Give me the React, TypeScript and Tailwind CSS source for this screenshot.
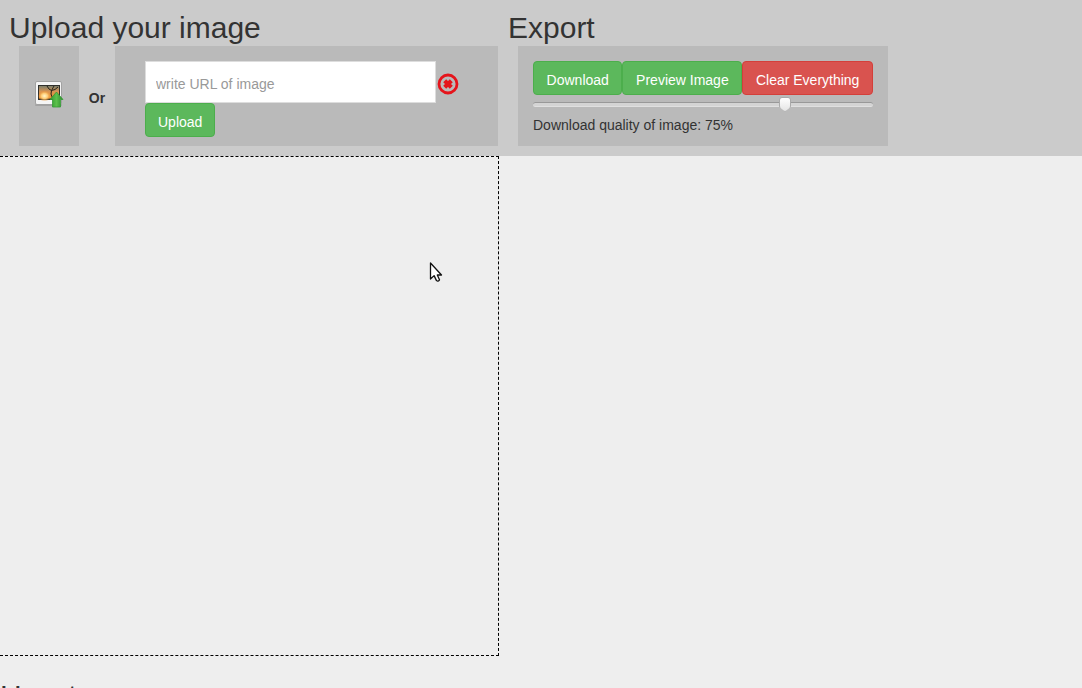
import { useState } from "react";

const button =
  "h-[34px] rounded border px-3 pt-1 text-sm leading-5 whitespace-nowrap text-white";
const green = "border-[#4cae4c] bg-[#5cb85c]";
const red = "border-[#d43f3a] bg-[#d9534f]";

function PictureIcon() {
  return (
    <svg width="30" height="30" viewBox="0 0 30 30" aria-hidden="true">
      <defs>
        <linearGradient id="sky" x1="0" y1="0" x2="0" y2="1">
          <stop offset="0" stopColor="#7d806c" />
          <stop offset="0.45" stopColor="#d89452" />
          <stop offset="1" stopColor="#ee9433" />
        </linearGradient>
        <radialGradient id="sun" cx="0.5" cy="0.5" r="0.5">
          <stop offset="0" stopColor="#fff6cc" />
          <stop offset="0.5" stopColor="#fdcb74" />
          <stop offset="1" stopColor="#e88a2c" stopOpacity="0" />
        </radialGradient>
        <linearGradient id="arrow" x1="0" y1="0" x2="1" y2="0">
          <stop offset="0" stopColor="#2f9a2f" />
          <stop offset="0.5" stopColor="#5cc04c" />
          <stop offset="1" stopColor="#2a8a2a" />
        </linearGradient>
      </defs>
      <rect x="1" y="25" width="27" height="2" rx="1" fill="#999" opacity="0.7" />
      <rect x="1.5" y="2.5" width="26" height="23" rx="1.5" fill="#f5f5f5" stroke="#a2a2a2" />
      <rect x="4" y="6" width="22" height="15" fill="#30302c" />
      <rect x="5" y="7" width="20" height="12.5" fill="url(#sky)" />
      <ellipse cx="10.5" cy="17" rx="6.5" ry="5.5" fill="url(#sun)" />
      <path d="M13 7l2 3 2.5 1.5L20 7M17.5 11.5L17 15l1.5 4M24 8l-3 2.5-3.5 1" stroke="#25241b" strokeWidth="1" fill="none" />
      <path d="M22.5 13l6.5 7.5h-2.5V28h-8v-7.5H16z" fill="url(#arrow)" stroke="#359a35" strokeWidth="0.8" strokeLinejoin="round" />
    </svg>
  );
}

function ClearIcon() {
  return (
    <svg width="22" height="22" viewBox="0 0 22 22" aria-hidden="true">
      <circle cx="11" cy="11" r="9" fill="none" stroke="#e5141b" strokeWidth="2.8" />
      <path d="M7.7 7.7l6.6 6.6M14.3 7.7l-6.6 6.6" stroke="#e5141b" strokeWidth="4.2" />
    </svg>
  );
}

function Pointer() {
  return (
    <svg
      className="pointer-events-none absolute left-[429px] top-[104px]"
      width="15"
      height="23"
      viewBox="0 0 15 23"
      aria-hidden="true"
    >
      <path
        d="M1.5 2v16l3.6-3.4 2.4 5q1.6 1.3 3-.8l-2.2-4.8h4.2z"
        fill="#fff"
        stroke="#111"
        strokeWidth="1.3"
        strokeLinejoin="round"
      />
    </svg>
  );
}

export default function App() {
  const [quality, setQuality] = useState(75);
  const [url, setUrl] = useState("");

  return (
    <div className="min-h-screen bg-[#eeeeee] font-['Liberation_Sans',Arial,sans-serif] text-sm leading-5 text-[#333333]">
      <header className="flex bg-[#cbcbcb] pt-[11px] pb-2.5">
        <section className="w-[499px] shrink-0">
          <h2 className="mb-0.5 pl-[9px] text-[30px] leading-[33px]">Upload your image</h2>
          <div className="flex items-stretch pr-px pl-[19px]">
            <button
              type="button"
              aria-label="Choose an image"
              className="flex h-[100px] w-[60px] items-center justify-center bg-[#bababa] pb-1"
            >
              <PictureIcon />
            </button>
            <strong className="flex w-9 items-center justify-center pt-1">Or</strong>
            <form
              className="flex flex-1 flex-col items-start bg-[#bababa] px-[30px] pt-[15px]"
              onSubmit={(event) => event.preventDefault()}
            >
              <div className="flex items-center">
                <input
                  type="text"
                  aria-label="Image URL"
                  placeholder="write URL of image"
                  value={url}
                  onChange={(event) => setUrl(event.target.value)}
                  className="h-[42px] w-[291px] border border-[#dddddd] bg-white px-2.5 pt-1 placeholder:text-[#999999]"
                />
                <button
                  type="button"
                  aria-label="Clear URL"
                  className="ml-px pt-1"
                  onClick={() => setUrl("")}
                >
                  <ClearIcon />
                </button>
              </div>
              <button type="submit" className={`${button} ${green}`}>
                Upload
              </button>
            </form>
          </div>
        </section>

        <section>
          <h2 className="mb-0.5 pl-[9px] text-[30px] leading-[33px]">Export</h2>
          <div className="ml-[19px] h-[100px] w-[370px] bg-[#bababa] p-[15px]">
            <div className="flex">
              <button type="button" className={`${button} ${green} grow`}>
                Download
              </button>
              <button type="button" className={`${button} ${green} grow`}>
                Preview Image
              </button>
              <button type="button" className={`${button} ${red} grow`}>
                Clear Everything
              </button>
            </div>
            <input
              id="quality"
              type="range"
              min={0}
              max={100}
              value={quality}
              onChange={(event) => setQuality(Number(event.target.value))}
              className="block h-[18px] w-full appearance-none bg-transparent [&::-webkit-slider-runnable-track]:h-[5px] [&::-webkit-slider-runnable-track]:rounded-sm [&::-webkit-slider-runnable-track]:border-t [&::-webkit-slider-runnable-track]:border-b [&::-webkit-slider-runnable-track]:border-t-[#999999] [&::-webkit-slider-runnable-track]:border-b-[#e0e0e0] [&::-webkit-slider-runnable-track]:bg-[#d4d4d4] [&::-webkit-slider-thumb]:-mt-[6px] [&::-webkit-slider-thumb]:h-[15px] [&::-webkit-slider-thumb]:w-3 [&::-webkit-slider-thumb]:appearance-none [&::-webkit-slider-thumb]:rounded-t-[3px] [&::-webkit-slider-thumb]:rounded-b-[6px] [&::-webkit-slider-thumb]:border [&::-webkit-slider-thumb]:border-[#aaaaaa] [&::-webkit-slider-thumb]:bg-linear-to-b [&::-webkit-slider-thumb]:from-white [&::-webkit-slider-thumb]:to-[#e4e4e4] [&::-webkit-slider-thumb]:[clip-path:polygon(0_0,100%_0,100%_68%,50%_100%,0_68%)]"
            />
            <label htmlFor="quality" className="mt-0.5 block">
              Download quality of image: {quality}%
            </label>
          </div>
        </section>
      </header>

      <main>
        <div className="relative h-[500px] w-[499px] border border-l-0 border-dashed border-black">
          <Pointer />
        </div>
        <h2 className="mt-[23px] text-[30px] leading-[33px]">How to</h2>
      </main>
    </div>
  );
}
